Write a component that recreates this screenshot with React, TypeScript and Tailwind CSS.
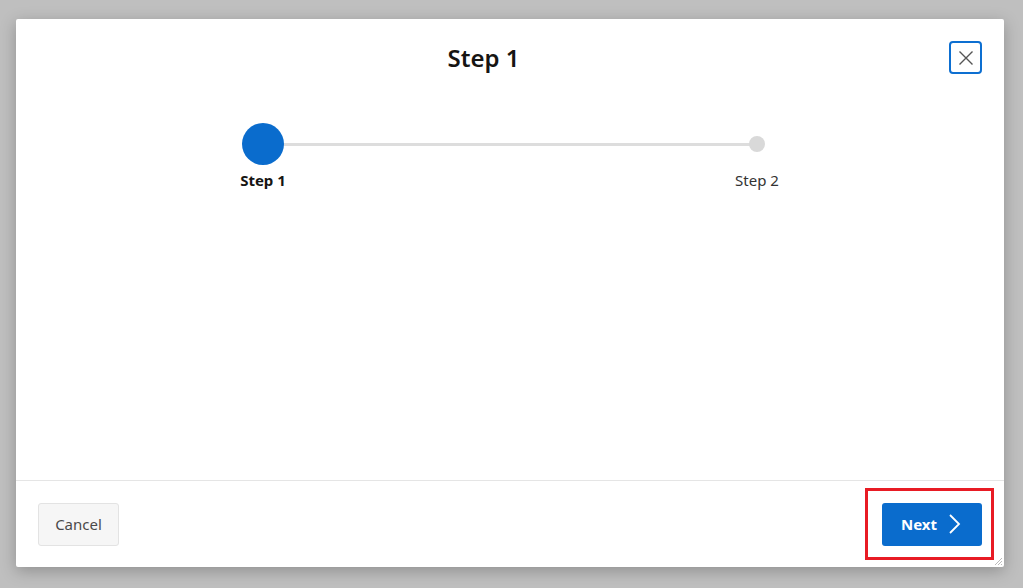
import React from "react";

export default function App() {
  return (
    <div
      className="h-[588px] w-[1023px] bg-[#bfbfbf] pt-[19px] pl-[16px] overflow-hidden"
      style={{ fontFamily: '"Noto Sans", "Open Sans", sans-serif' }}
    >
      <div className="relative flex h-[548px] w-[988px] flex-col rounded-[2px] bg-white shadow-[0_4px_16px_rgba(0,0,0,0.25)]">
        {/* Header */}
        <div className="flex h-[78px] items-start pl-[16px] pr-[22px] pt-[22px]">
          <div className="flex-1 text-center text-[24px] font-semibold text-[#161513] pr-[14px] -mt-[1px]">
            Step 1
          </div>
          <button className="flex h-[33px] w-[33px] items-center justify-center rounded-[4px] border-2 border-[#0d6fd1] bg-white">
            <svg width="16" height="16" viewBox="0 0 16 16" fill="none">
              <path d="M1.5 1.5 L14.5 14.5 M14.5 1.5 L1.5 14.5" stroke="#555" strokeWidth="1.4" />
            </svg>
          </button>
        </div>
        {/* Stepper */}
        <div className="flex justify-center pt-[26px]">
          <div className="relative flex w-[588px] justify-between">
            <div className="absolute left-[47px] right-[47px] top-[20px] h-[3px] bg-[#dddddd]" />
            <div className="relative z-10 flex w-[94px] flex-col items-center">
              <div className="h-[42px] w-[42px] rounded-full bg-[#0a6ccd]" />
              <div className="mt-[4px] text-[15px] font-bold text-[#161513]">Step 1</div>
            </div>
            <div className="relative z-10 flex w-[94px] flex-col items-center">
              <div className="mt-[13px] h-[16px] w-[16px] rounded-full bg-[#d9d9d9]" />
              <div className="mt-[17px] text-[15px] text-[#333]">Step 2</div>
            </div>
          </div>
        </div>
        <div className="flex-1" />
        {/* Footer */}
        <div className="flex h-[87px] items-center justify-between border-t border-[#e5e5e5] pl-[22px] pr-[22px]">
          <button className="h-[43px] w-[81px] rounded-[3px] border border-[#e3e3e3] bg-[#f6f6f6] text-[15px] text-[#4a4a4a]">
            Cancel
          </button>
          <div className="-mr-[12px] flex h-[72px] w-[129px] items-center justify-end border-[3px] border-[#e81b24] pr-[9px]">
            <button className="flex h-[43px] w-[100px] items-center justify-center gap-[11px] rounded-[3px] bg-[#0a6ccd] pr-[2px] text-[15px] font-bold text-white">
              Next
              <svg width="13" height="22" viewBox="0 0 13 22" fill="none">
                <path d="M2 2 L11 11 L2 20" stroke="white" strokeWidth="1.8" />
              </svg>
            </button>
          </div>
        </div>
        <svg className="absolute bottom-[1px] right-[1px]" width="9" height="9" viewBox="0 0 9 9">
          <path d="M8 1 L1 8 M8 4 L4 8 M8 7 L7 8" stroke="#bbb" strokeWidth="1" />
        </svg>
      </div>
    </div>
  );
}
